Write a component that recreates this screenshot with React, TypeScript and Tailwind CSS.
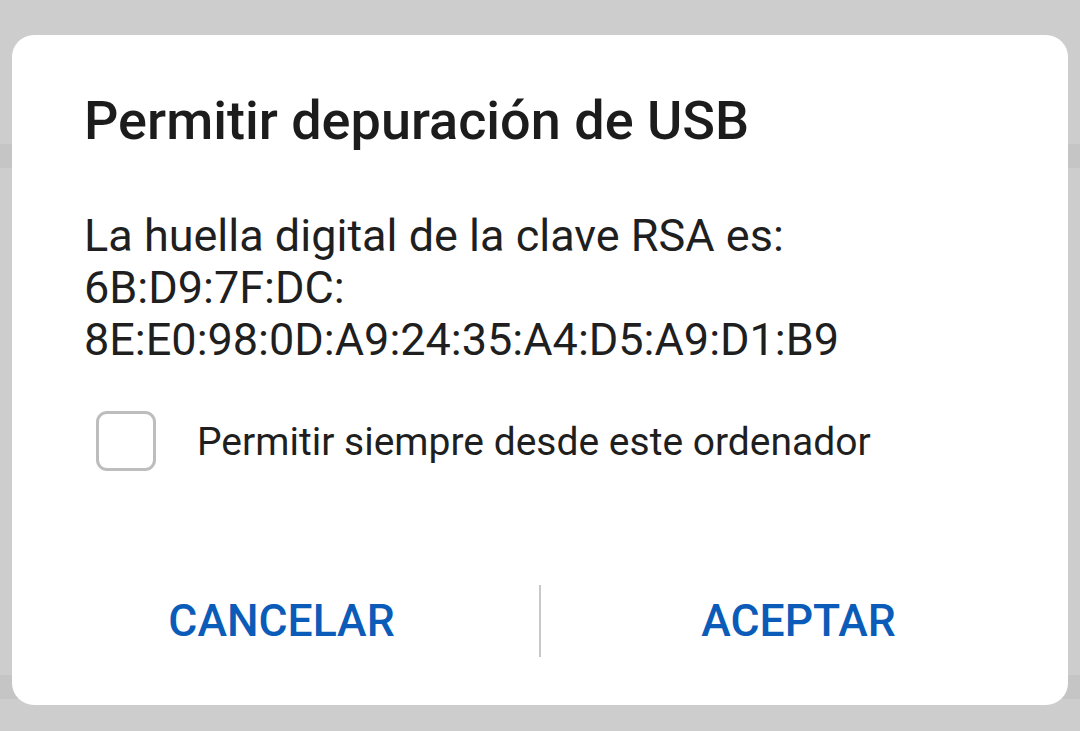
import React from "react";

export default function App() {
  return (
    <div
      className="relative w-[1080px] h-[731px] overflow-hidden bg-[#cdcdcd]"
      style={{ fontFamily: "Roboto, 'Noto Sans', sans-serif" }}
    >
      <div className="flex flex-col">
        <div className="h-[144px]" />
        <div className="h-[24px] bg-[#c5c5c5]" />
        <div className="h-[507px]" />
        <div className="h-[24px] bg-[#c5c5c5]" />
      </div>

      <div className="absolute left-[12px] top-[35px] w-[1056px] h-[670px] rounded-[22px] bg-white flex flex-col">
        <div className="pl-[72px] pt-[58px]">
          <h1 className="text-[54px] leading-[56px] font-medium text-[#1c1c1c] whitespace-nowrap">
            Permitir depuración de USB
          </h1>
          <div className="mt-[61px] text-[45px] leading-[52px] text-[#1f1f1f] whitespace-nowrap">
            <div>La huella digital de la clave RSA es:</div>
            <div>6B:D9:7F:DC:</div>
            <div>8E:E0:98:0D:A9:24:35:A4:D5:A9:D1:B9</div>
          </div>
        </div>
        <div className="flex items-center pl-[84px] mt-[45px] h-[60px]">
          <div className="w-[60px] h-[60px] rounded-[11px] border-[3px] border-[#bdbdbd] shrink-0" />
          <span className="ml-[41px] pt-[3px] text-[39px] leading-none text-[#1f1f1f] whitespace-nowrap">
            Permitir siempre desde este ordenador
          </span>
        </div>
        <div className="mt-auto mb-[48px] px-[12px] flex items-center h-[72px]">
          <button className="flex-1 text-[44.5px] font-medium text-[#0b5cb8]">
            CANCELAR
          </button>
          <div className="w-[2px] h-[72px] bg-[#c8c8c8]" />
          <button className="flex-1 text-[44.5px] font-medium text-[#0b5cb8]">
            ACEPTAR
          </button>
        </div>
      </div>
    </div>
  );
}
